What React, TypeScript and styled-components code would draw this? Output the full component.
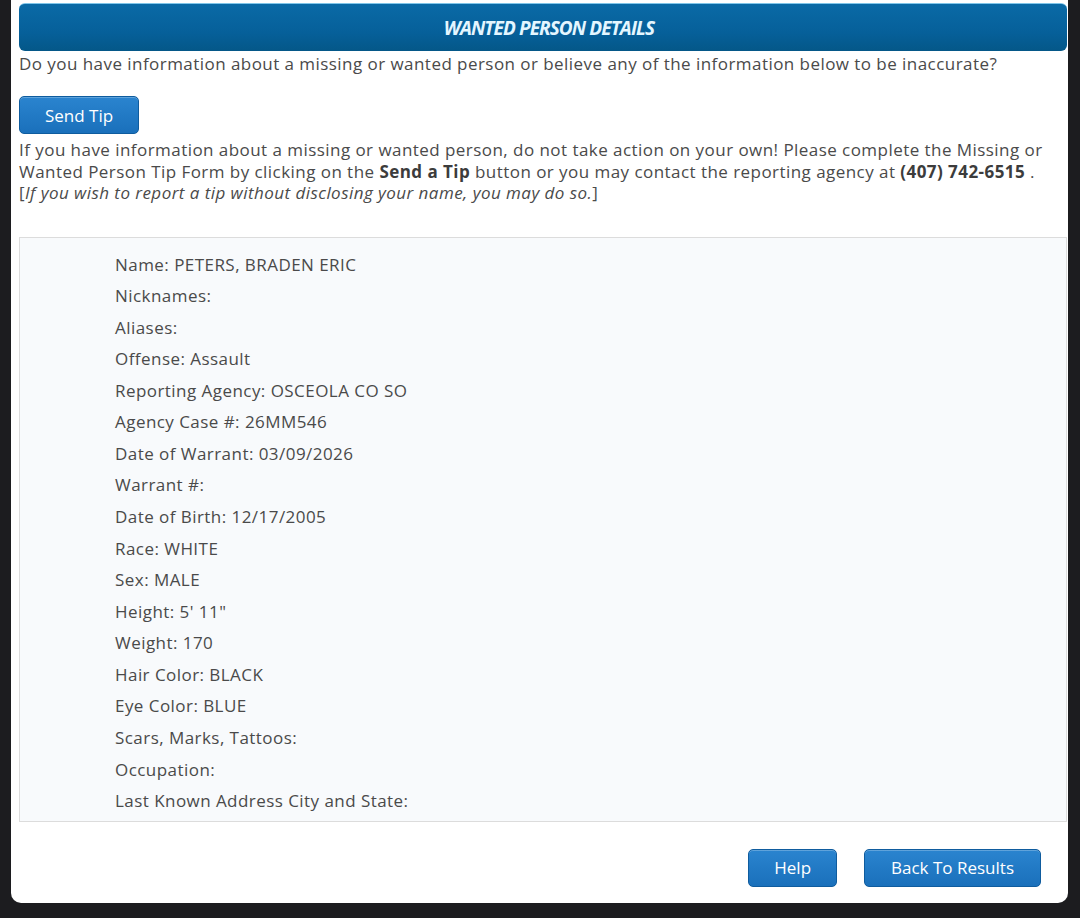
import React from 'react';
import styled, { createGlobalStyle } from 'styled-components';

const GlobalStyle = createGlobalStyle`
	html, body {
		margin: 0;
		padding: 0;
		background: #1c1c1f;
	}
	body {
		font-family: 'Open Sans', 'DejaVu Sans', sans-serif;
	}
`;

const Frame = styled.div`
	width: 1080px;
	height: 918px;
	padding: 0 12px 15px 11px;
	box-sizing: border-box;
	background: #1c1c1f;
`;

const Panel = styled.div`
	height: 100%;
	box-sizing: border-box;
	background: #fff;
	border-radius: 0 0 10px 10px;
	padding: 3px 1px 0 8px;
	display: flex;
	flex-direction: column;
	color: #4a4a4a;
	font-size: 17px;
	letter-spacing: 0.45px;
`;

const Header = styled.div`
	height: 48px;
	flex-shrink: 0;
	border-radius: 6px;
	border-top: 1px solid #7fc6ea;
	background: linear-gradient(to bottom, #0a6aa6 0%, #06609a 60%, #045788 100%);
	display: flex;
	align-items: center;
	justify-content: center;
	box-sizing: border-box;
`;

const Title = styled.h1`
	margin: 0 0 0 12px;
	font-size: 19px;
	font-style: italic;
	font-weight: 700;
	letter-spacing: -0.9px;
	color: #e4f6ff;
`;

const Intro = styled.p`
	margin: 1px 0 0;
	line-height: 24px;
`;

const Button = styled.button`
	height: 38px;
	padding: 0 ${({ $wide }: { $wide?: boolean }) => ($wide ? '26px' : '25px')};
	border: 1px solid #0f5c9e;
	border-radius: 5px;
	background: linear-gradient(to bottom, #2a84cf 0%, #1a70bb 100%);
	color: #fff;
	font-family: 'Open Sans', 'DejaVu Sans', sans-serif;
	font-size: 17px;
	box-shadow: inset 0 1px 0 rgba(255, 255, 255, 0.25);
	cursor: pointer;
`;

const TipRow = styled.div`
	margin-top: 20px;
`;

const Notice = styled.p`
	margin: 5px 0 0;
	line-height: 21.5px;
	strong {
		font-weight: 700;
		color: #3c3c3c;
	}
`;

const Details = styled.div`
	margin-top: 33px;
	height: 585px;
	flex-shrink: 0;
	box-sizing: border-box;
	border: 1px solid #dcdcdc;
	background: #f8fafc;
	padding: 15px 0 0 95px;
	display: flex;
	flex-direction: column;
`;

const Field = styled.div`
	height: 31.8px;
	line-height: 24px;
`;

const Actions = styled.div`
	display: flex;
	justify-content: flex-end;
	gap: 27px;
	padding: 27px 26px 0 0;
`;

const fields: [string, string][] = [
	['Name', 'PETERS, BRADEN ERIC'],
	['Nicknames', ''],
	['Aliases', ''],
	['Offense', 'Assault'],
	['Reporting Agency', 'OSCEOLA CO SO'],
	['Agency Case #', '26MM546'],
	['Date of Warrant', '03/09/2026'],
	['Warrant #', ''],
	['Date of Birth', '12/17/2005'],
	['Race', 'WHITE'],
	['Sex', 'MALE'],
	['Height', '5\' 11"'],
	['Weight', '170'],
	['Hair Color', 'BLACK'],
	['Eye Color', 'BLUE'],
	['Scars, Marks, Tattoos', ''],
	['Occupation', ''],
	['Last Known Address City and State', ''],
];

const App = () => {
	return (
		<Frame>
			<GlobalStyle />
			<Panel>
				<Header>
					<Title>WANTED PERSON DETAILS</Title>
				</Header>
				<Intro>
					Do you have information about a missing or wanted person or believe any of the information below to be
					inaccurate?
				</Intro>
				<TipRow>
					<Button>Send Tip</Button>
				</TipRow>
				<Notice>
					If you have information about a missing or wanted person, do not take action on your own! Please complete the
					Missing or Wanted Person Tip Form by clicking on the <strong>Send a Tip</strong> button or you may contact the
					reporting agency at <strong>(407) 742-6515</strong> .
					<br />[<em>If you wish to report a tip without disclosing your name, you may do so.</em>]
				</Notice>
				<Details>
					{fields.map(([label, value]) => (
						<Field key={label}>
							{label}: {value}
						</Field>
					))}
				</Details>
				<Actions>
					<Button>Help</Button>
					<Button $wide>Back To Results</Button>
				</Actions>
			</Panel>
		</Frame>
	);
};

export default App;
